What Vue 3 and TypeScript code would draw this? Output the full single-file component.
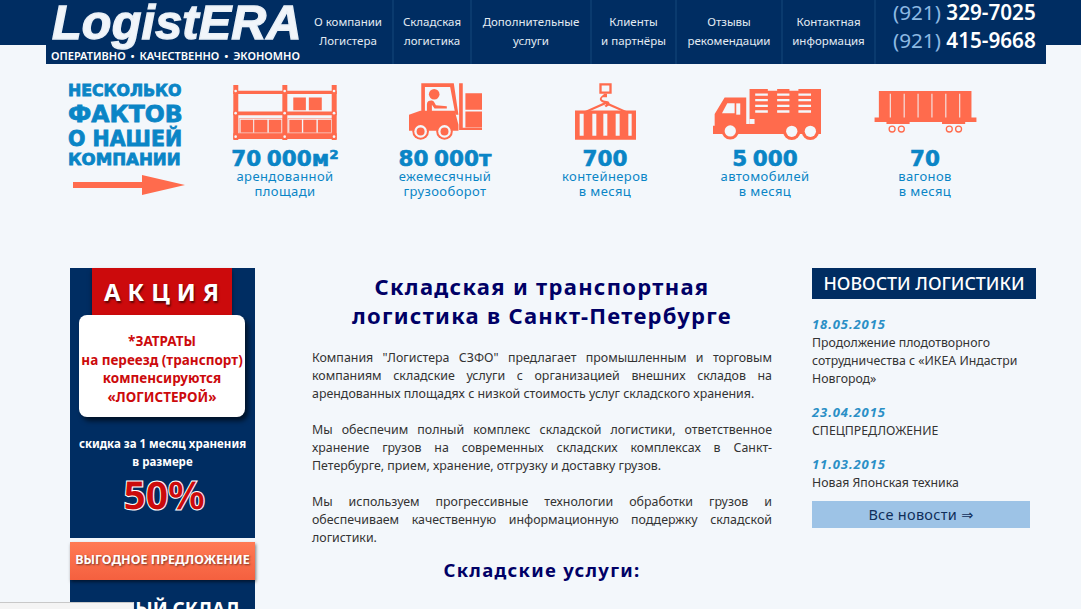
<script setup lang="ts">
const navItems = [
  { top: 'О компании', bottom: 'Логистера', width: 90 },
  { top: 'Складская', bottom: 'логистика', width: 78 },
  { top: 'Дополнительные', bottom: 'услуги', width: 120 },
  { top: 'Клиенты', bottom: 'и партнёры', width: 85 },
  { top: 'Отзывы', bottom: 'рекомендации', width: 106 },
  { top: 'Контактная', bottom: 'информация', width: 93 },
]

const phones = ['329-7025', '415-9668']

const stats = [
  { id: 'rack', value: '70 000', unit: 'м²', label: ['арендованной', 'площади'] },
  { id: 'forklift', value: '80 000', unit: 'т', label: ['ежемесячный', 'грузооборот'] },
  { id: 'container', value: '700', unit: '', label: ['контейнеров', 'в месяц'] },
  { id: 'truck', value: '5 000', unit: '', label: ['автомобилей', 'в месяц'] },
  { id: 'wagon', value: '70', unit: '', label: ['вагонов', 'в месяц'] },
]

const paragraphs = [
  'Компания "Логистера СЗФО" предлагает промышленным и торговым компаниям складские услуги с организацией внешних складов на арендованных площадях с низкой стоимость услуг складского хранения.',
  'Мы обеспечим полный комплекс складской логистики, ответственное хранение грузов на современных складских комплексах в Санкт-Петербурге, прием, хранение, отгрузку и доставку грузов.',
  'Мы используем прогрессивные технологии обработки грузов и обеспечиваем качественную информационную поддержку складской логистики.',
]

const news = [
  { date: '18.05.2015', title: 'Продолжение плодотворного сотрудничества с «ИКЕА Индастри Новгород»' },
  { date: '23.04.2015', title: 'СПЕЦПРЕДЛОЖЕНИЕ' },
  { date: '11.03.2015', title: 'Новая Японская техника' },
]
</script>

<template>
  <div class="page">
    <header class="header">
      <div class="header-inner">
        <div class="brand">
          <div class="logo">LogistERA</div>
          <div class="tagline">ОПЕРАТИВНО • КАЧЕСТВЕННО • ЭКОНОМНО</div>
        </div>
        <nav class="nav">
          <a v-for="item in navItems" :key="item.top" class="nav-item" :style="{ width: item.width + 'px' }">
            {{ item.top }}<br />{{ item.bottom }}
          </a>
        </nav>
        <div class="phones">
          <div v-for="phone in phones" :key="phone" class="phone"><span class="code">(921)</span> {{ phone }}</div>
        </div>
      </div>
    </header>

    <section class="facts">
      <div class="facts-title">
        <div class="ft1">НЕСКОЛЬКО</div>
        <div class="ft2">ФАКТОВ</div>
        <div class="ft3">О НАШЕЙ</div>
        <div class="ft4">КОМПАНИИ</div>
        <svg class="arrow" viewBox="0 0 112 20"><path d="M0 7h69V0l43 10-43 10v-7H0z" /></svg>
      </div>
      <div v-for="stat in stats" :key="stat.id" class="stat">
        <div class="stat-icon">
          <svg v-if="stat.id === 'rack'" width="104" height="55" viewBox="15 12 312 166">
            <path d="M15 12h15v166H15zM163 12h15v166h-15zM312 12h15v166h-15z" />
            <path d="M15 29h312v10H15zM15 92h312v11H15zM15 158h312v17H15z" />
            <path d="M196 50h38v38h-38zM243 50h39v38h-39z" />
            <path d="M37 117h38v38H37zM78 117h40v38H78zM122 117h38v38h-38zM184 117h38v38h-38zM226 117h40v38h-40zM270 117h40v38h-40z" />
            <path d="M33 113h131v44H33zM180 113h134v44H180z" class="frame" />
            <circle cx="22" cy="30" r="4" class="cut" /><circle cx="170" cy="30" r="4" class="cut" /><circle cx="319" cy="30" r="4" class="cut" />
            <circle cx="22" cy="97" r="4" class="cut" /><circle cx="170" cy="97" r="4" class="cut" /><circle cx="319" cy="97" r="4" class="cut" />
            <circle cx="22" cy="168" r="4" class="cut" /><circle cx="170" cy="168" r="4" class="cut" /><circle cx="319" cy="168" r="4" class="cut" />
          </svg>
          <svg v-else-if="stat.id === 'forklift'" width="73" height="57" viewBox="15 15 220 170">
            <path d="M52 15h98l14 95h-9L139 26H63v75H52z" />
            <circle cx="91" cy="48" r="16" />
            <path d="M69 100V78c0-8 6-11 13-11 8 0 10 7 14 14l33 3v7H92L84 80v20z" />
            <path d="M15 110l34-12h104l11 42v18H15z" />
            <path d="M166 15h11v141h-11zM177 149h58v7h-58z" />
            <path d="M185 45h50v50h-50zM185 100h50v48h-50z" />
            <circle cx="50" cy="160" r="25" /><circle cx="50" cy="160" r="19" class="cut" /><circle cx="50" cy="160" r="12" />
            <circle cx="122" cy="160" r="25" /><circle cx="122" cy="160" r="19" class="cut" /><circle cx="122" cy="160" r="12" />
          </svg>
          <svg v-else-if="stat.id === 'container'" width="61" height="57" viewBox="0 0 183 170">
            <path d="M73 0h37v32H73zM80 7v18h23V7z" fill-rule="evenodd" />
            <path d="M88 32h8v10L83 42c-9 8 4 10 15 12 6 1 7 8 4 12l-9 6-5-5c5-1 7-4 4-6-10-2-24-10-14-20z" />
            <path d="M92 56l72 32-3 5-69-30-69 30-3-5z" />
            <path d="M0 82h183v88H0z" />
            <path d="M14 92h12v66H14zM52 92h12v66H52zM85 92h12v66H85zM122 92h12v66h-12zM160 92h10v66h-10z" class="cut" />
          </svg>
          <svg v-else-if="stat.id === 'truck'" class="icon-truck" width="108" height="51" viewBox="15 15 325 153">
            <path d="M125 15h215v105H125z" />
            <path d="M142 28h38v7h-38zM142 45h38v7h-38zM142 62h38v7h-38zM142 79h38v7h-38zM208 28h37v7h-37zM208 45h37v7h-37zM208 62h37v7h-37zM208 79h37v7h-37zM272 28h38v7h-38zM272 45h38v7h-38zM272 62h38v7h-38zM272 79h38v7h-38zM180 15h28v5h-28zM245 15h27v5h-27z" class="cut" />
            <path d="M125 105h15v15h-15z" class="cut" />
            <path d="M20 90l30-50h65v80h225v30H15v-25h5z" />
            <path d="M42 88l16-30h22v30z" class="cut" />
            <path d="M85 58h12v34H85z" class="cut" />
            <circle cx="67" cy="141" r="26" /><circle cx="67" cy="141" r="17" class="cut" />
            <circle cx="252" cy="142" r="26" /><circle cx="252" cy="142" r="17" class="cut" />
            <circle cx="308" cy="142" r="26" /><circle cx="308" cy="142" r="17" class="cut" />
          </svg>
          <svg v-else class="icon-wagon" width="103" height="42" viewBox="0 0 308 127">
            <path d="M13 0h280v92H13zM0 80h308v14H0z" />
            <path d="M46 8h3v72h-3zM88 8h3v72h-3zM130 8h3v72h-3zM172 8h3v72h-3zM214 8h3v72h-3zM256 8h3v72h-3z" class="cut" />
            <path d="M36 92h70v8H36zM204 92h70v8H204z" />
            <g class="ring">
              <circle cx="53" cy="115" r="9" /><circle cx="81" cy="115" r="9" /><circle cx="226" cy="115" r="9" /><circle cx="254" cy="115" r="9" />
            </g>
          </svg>
        </div>
        <div class="stat-value">{{ stat.value }}<span v-if="stat.unit" class="stat-unit">{{ stat.unit }}</span></div>
        <div class="stat-label">{{ stat.label[0] }}<br />{{ stat.label[1] }}</div>
      </div>
    </section>

    <div class="columns">
      <aside class="promo">
        <div class="promo-card">
          <div class="promo-ribbon">АКЦИЯ</div>
          <div class="promo-note">*ЗАТРАТЫ<br />на переезд (транспорт)<br />компенсируются<br />«ЛОГИСТЕРОЙ»</div>
          <div class="promo-text">скидка за 1 месяц хранения<br />в размере</div>
          <div class="promo-percent">50%</div>
        </div>
        <div class="offer">ВЫГОДНОЕ ПРЕДЛОЖЕНИЕ</div>
        <div class="warm">ТЕПЛЫЙ СКЛАД</div>
      </aside>

      <main class="content">
        <h1>Складская и транспортная<br />логистика в Санкт-Петербурге</h1>
        <p v-for="text in paragraphs" :key="text">{{ text }}</p>
        <h2>Складские услуги:</h2>
      </main>

      <aside class="news">
        <div class="news-head">НОВОСТИ ЛОГИСТИКИ</div>
        <div v-for="item in news" :key="item.date" class="news-item">
          <div class="news-date">{{ item.date }}</div>
          <div class="news-title">{{ item.title }}</div>
        </div>
        <a class="news-all">Все новости ⇒</a>
      </aside>
    </div>

    <div class="status-bubble"></div>
  </div>
</template>

<style>
html,
body {
  margin: 0;
  height: 609px;
  overflow: hidden;
  background: #f3f7fb;
}
</style>

<style scoped>
.page {
  position: relative;
  width: 1081px;
  height: 609px;
  overflow: hidden;
  background: #f3f7fb;
  font-family: "Noto Sans", "DejaVu Sans", sans-serif;
  color: #333;
}

.header {
  height: 64px;
  background: linear-gradient(#002d62 45px, transparent 45px);
}

.header-inner {
  display: flex;
  width: 1000px;
  height: 64px;
  margin-left: 46px;
  background: #002d62;
}

.brand {
  width: 258px;
  flex: none;
}

.logo {
  height: 47px;
  padding-left: 6px;
  font-family: "Liberation Sans", sans-serif;
  font-size: 48.5px;
  line-height: 44px;
  font-weight: 700;
  font-style: italic;
  letter-spacing: 0.2px;
  color: #f1f5fa;
  -webkit-text-stroke: 1.4px #e9f0f7;
}

.tagline {
  padding-left: 5px;
  font-size: 11px;
  line-height: 17px;
  font-weight: 600;
  color: #fff;
  white-space: nowrap;
  word-spacing: 2px;
}

.nav {
  display: flex;
}

.nav-item {
  box-sizing: border-box;
  border-right: 2px solid #0a3a6e;
  padding-top: 12px;
  text-align: center;
  font-size: 11.5px;
  line-height: 19px;
  color: #e3ebf3;
  white-space: nowrap;
}

.phones {
  display: flex;
  flex-direction: column;
  gap: 4px;
  padding-left: 17px;
}

.phone {
  font-size: 20.7px;
  line-height: 24px;
  font-weight: 600;
  color: #fff;
  white-space: nowrap;
}

.code {
  font-weight: 400;
  color: #8db9e2;
}

.facts {
  display: flex;
  height: 204px;
  box-sizing: border-box;
  padding: 19px 0 0 68px;
}

.facts-title {
  width: 137px;
  flex: none;
  font-family: "DejaVu Sans", sans-serif;
  font-weight: 700;
  color: #0a85c6;
  -webkit-text-stroke: 0.8px #0a85c6;
}

.ft1 {
  font-size: 15.8px;
  line-height: 15px;
}

.ft2 {
  margin-top: 2px;
  font-size: 23.5px;
  line-height: 28px;
}

.ft3 {
  font-size: 20.5px;
  line-height: 22px;
}

.ft4 {
  font-size: 16.6px;
  line-height: 20px;
}

.arrow {
  display: block;
  width: 112px;
  height: 20px;
  margin: 5px 0 0 5px;
  fill: #ff6b4d;
}

.stat {
  width: 160px;
  flex: none;
  text-align: center;
  color: #0a85c6;
}

.stat-icon {
  display: flex;
  align-items: flex-end;
  justify-content: center;
  height: 57px;
}

.stat-icon svg {
  display: block;
  fill: #ff6b4d;
}

.icon-truck {
  margin-left: 4px;
}

.icon-wagon {
  margin-bottom: 7px;
}

.cut {
  fill: #f3f7fb;
}

.frame {
  fill: none;
  stroke: #ff6b4d;
  stroke-width: 1.5;
}

.ring circle {
  fill: none;
  stroke: #ff6b4d;
  stroke-width: 4;
}

.stat-value {
  margin-top: 7px;
  margin-bottom: -2px;
  font-family: "DejaVu Sans", sans-serif;
  font-size: 21.5px;
  line-height: 24px;
  font-weight: 700;
  word-spacing: -2px;
  -webkit-text-stroke: 0.6px #0a85c6;
}

.stat-label {
  font-size: 13px;
  line-height: 15px;
  letter-spacing: 0.4px;
}

.columns {
  display: grid;
  grid-template-columns: 185px 460px 224px;
  column-gap: 57px;
  padding-left: 70px;
}

.columns > .news {
  margin-left: -17px;
}

.promo-card {
  box-sizing: border-box;
  height: 270px;
  background: #002d62;
  text-align: center;
  color: #fff;
}

.promo-ribbon {
  box-sizing: border-box;
  width: 140px;
  height: 48px;
  margin: 0 auto 0 22px;
  padding-left: 6px;
  background: #cc0a0c;
  box-shadow: 0 3px 4px rgba(0, 0, 0, 0.5);
  font-size: 24px;
  line-height: 48px;
  font-weight: 700;
  letter-spacing: 7px;
  text-shadow: 1px 2px 2px rgba(0, 0, 0, 0.6);
}

.promo-note {
  box-sizing: border-box;
  position: relative;
  width: 166px;
  height: 102px;
  margin: -1px 0 0 9px;
  padding-top: 17px;
  border-radius: 8px;
  background: #fff;
  box-shadow: 3px 4px 5px rgba(0, 0, 0, 0.6);
  font-size: 13.5px;
  line-height: 18.5px;
  font-weight: 700;
  color: #cc0a0c;
  white-space: nowrap;
}

.promo-text {
  margin-top: 18px;
  font-size: 11.5px;
  line-height: 18px;
  font-weight: 700;
  white-space: nowrap;
}

.promo-percent {
  margin-top: 2px;
  padding-left: 2px;
  font-size: 40.5px;
  line-height: 44px;
  font-weight: 800;
  color: #cc0a0c;
  -webkit-text-stroke: 1px #fff;
  letter-spacing: -1px;
}

.offer {
  box-sizing: border-box;
  height: 38px;
  margin-top: 4px;
  background: linear-gradient(#ff7a55, #f4603f);
  box-shadow: 1px 2px 3px rgba(0, 0, 0, 0.5);
  position: relative;
  text-align: center;
  font-size: 12.5px;
  line-height: 36px;
  font-weight: 700;
  color: #fff;
  white-space: nowrap;
  text-shadow: 1px 1px 2px rgba(0, 0, 0, 0.5);
}

.warm {
  height: 60px;
  padding-top: 16px;
  background: #002d62;
  text-align: center;
  font-size: 19px;
  font-weight: 700;
  color: #fff;
}

.content {
  width: 460px;
}

h1 {
  margin: 4px 0 19px;
  text-align: center;
  font-size: 22px;
  line-height: 29px;
  font-weight: 700;
  letter-spacing: 1.3px;
  color: #000066;
}

p {
  margin: 0 0 18px;
  font-size: 12.4px;
  line-height: 18px;
  text-align: justify;
  color: #333;
}

h2 {
  margin: -7px 0 0;
  text-align: center;
  font-size: 18.5px;
  line-height: 24px;
  font-weight: 700;
  letter-spacing: 1.3px;
  color: #000066;
}

.news {
  width: 224px;
}

.news-head {
  height: 31px;
  margin-bottom: 16px;
  background: #002d62;
  text-align: center;
  font-size: 17.8px;
  line-height: 31px;
  font-weight: 500;
  color: #fff;
  white-space: nowrap;
}

.news-item {
  margin-bottom: 16px;
}

.news-date {
  font-size: 13px;
  line-height: 18px;
  font-weight: 700;
  font-style: italic;
  letter-spacing: 0.9px;
  color: #2a8fc6;
}

.news-title {
  padding-top: 1px;
  margin-bottom: -1px;
  font-size: 12.3px;
  line-height: 18px;
  color: #333;
}

.news-all {
  display: block;
  width: 218px;
  height: 27px;
  margin-top: -7px;
  background: #9dc3e6;
  text-align: center;
  font-size: 14.5px;
  line-height: 27px;
  letter-spacing: 0.3px;
  color: #0f2e5a;
}

.status-bubble {
  position: absolute;
  left: 0;
  bottom: 0;
  width: 133px;
  height: 6px;
  background: #f4f4f4;
  border-top: 1px solid #c8c8c8;
  border-right: 1px solid #e4e4e4;
}
</style>
